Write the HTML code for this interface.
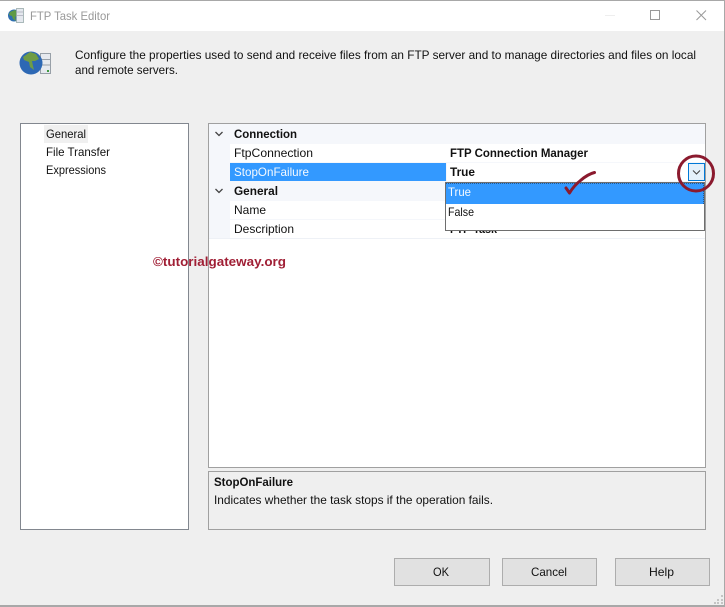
<!DOCTYPE html>
<html><head><meta charset="utf-8"><style>
html,body{margin:0;padding:0;background:#efefef;width:725px;height:607px;overflow:hidden}
svg{display:block}
text{font-family:"Liberation Sans",sans-serif;font-size:12px;fill:#111}
.b{font-weight:bold}
</style></head><body>
<svg width="725" height="607" viewBox="0 0 725 607" xmlns="http://www.w3.org/2000/svg" shape-rendering="crispEdges">
<rect width="725" height="607" fill="#efefef"/>
<rect y="0" width="725" height="31" fill="#fff"/>
<rect y="0" width="725" height="1" fill="#a8a8a8"/>
<rect x="724" width="1" height="607" fill="#a8a8a8"/>
<rect y="605" width="725" height="2" fill="#a8a8a8"/>
<!-- title icon -->
<g shape-rendering="auto">
<circle cx="14" cy="15.500" r="6" fill="#2f6fb0"/><path d="M10 12l5-2 3 2-1 4-2 1 1 4-3-2-1-3-3-1z" fill="#5f9a45"/>
<rect x="16.500" y="8.500" width="7" height="14" fill="#e4e8ee" stroke="#9aa" stroke-width=".8"/>
<path d="M17 12h6M17 15.500h6" stroke="#aab" stroke-width=".7"/>
</g>
<text x="30" y="20" textLength="80" lengthAdjust="spacingAndGlyphs" style="fill:#999">FTP Task Editor</text>
<!-- window controls -->
<rect x="605" y="15" width="10" height="1" fill="#eee"/>
<rect x="650.500" y="10.500" width="9" height="9" fill="none" stroke="#999"/>
<path d="M696.500 10.500L706 20M706 10.500L696.500 20" stroke="#999" fill="none" shape-rendering="auto"/>
<!-- large icon -->
<g shape-rendering="auto">
<rect x="40.500" y="53.500" width="10" height="20" fill="#e6e9ee" stroke="#98a0a8"/>
<path d="M41 59.500h9M41 65h9" stroke="#98a0a8"/>
<rect x="47" y="70" width="2" height="2" fill="#3f9a3f"/>
<circle cx="31" cy="63" r="11.500" fill="#2d68b4"/>
<path d="M23 57l7-5 6 2 3 5-4 2-3 0 1 5 1 4-4-3-1-5-5-2z" fill="#6f9c45"/>
</g>
<text x="75" y="59" textLength="621" lengthAdjust="spacingAndGlyphs">Configure the properties used to send and receive files from an FTP server and to manage directories and files on local</text>
<text x="75" y="74" textLength="103" lengthAdjust="spacingAndGlyphs">and remote servers.</text>
<!-- left panel -->
<rect x="20.500" y="123.500" width="168" height="406" fill="#fff" stroke="#82878f"/>
<rect x="44" y="125" width="44" height="18" fill="#f0f0f0"/>
<text x="46" y="138" textLength="40" lengthAdjust="spacingAndGlyphs">General</text>
<text x="46" y="156" textLength="64" lengthAdjust="spacingAndGlyphs">File Transfer</text>
<text x="46" y="174" textLength="60" lengthAdjust="spacingAndGlyphs">Expressions</text>
<!-- property grid -->
<rect x="208.500" y="123.500" width="497" height="344" fill="#fff" stroke="#a0a0a0"/>
<rect x="209" y="124" width="496" height="115" fill="#f5f7fb"/>
<rect x="230" y="144" width="475" height="18" fill="#fff"/>
<rect x="230" y="163" width="216" height="18" fill="#3399ff"/>
<rect x="447" y="163" width="258" height="18" fill="#fff"/>
<rect x="230" y="201" width="475" height="18" fill="#fff"/>
<rect x="230" y="220" width="475" height="18" fill="#fff"/>
<rect x="209" y="238" width="496" height="1" fill="#eef1f6"/>
<path d="M215.500 132l3.500 3.500 3.500-3.500M215.500 189l3.500 3.500 3.500-3.500" fill="none" stroke="#444" stroke-width="1.300" shape-rendering="auto"/>
<text class="b" x="234" y="138" textLength="63" lengthAdjust="spacingAndGlyphs">Connection</text>
<text x="234" y="157" textLength="79" lengthAdjust="spacingAndGlyphs">FtpConnection</text>
<text x="234" y="176" textLength="75" lengthAdjust="spacingAndGlyphs" style="fill:#f4f9ff">StopOnFailure</text>
<text class="b" x="234" y="195" textLength="44" lengthAdjust="spacingAndGlyphs">General</text>
<text x="234" y="214" textLength="32" lengthAdjust="spacingAndGlyphs">Name</text>
<text x="234" y="233" textLength="60" lengthAdjust="spacingAndGlyphs">Description</text>
<text class="b" x="450" y="157" textLength="138" lengthAdjust="spacingAndGlyphs">FTP Connection Manager</text>
<text class="b" x="450" y="176" textLength="25" lengthAdjust="spacingAndGlyphs">True</text>
<text class="b" x="450" y="233" textLength="47" lengthAdjust="spacingAndGlyphs">FTP Task</text>
<!-- dropdown button -->
<rect x="688.500" y="163.500" width="16" height="17" fill="#e5f1fb" stroke="#0078d7"/>
<path d="M693 170.500l3.500 3.500 3.500-3.500" fill="none" stroke="#444" stroke-width="1.100" shape-rendering="auto"/>
<!-- dropdown list -->
<rect x="445.500" y="182.500" width="259" height="48" fill="#fff" stroke="#6e6e6e"/>
<rect x="446" y="183" width="258" height="21" fill="#3399ff"/>
<path d="M446 183.500h258M703.500 183v21" fill="none" stroke="#1b3556" stroke-dasharray="1 1" stroke-opacity=".65"/>
<text x="448" y="196" textLength="23" lengthAdjust="spacingAndGlyphs" style="fill:#f4f9ff">True</text>
<text x="448" y="216" textLength="26" lengthAdjust="spacingAndGlyphs">False</text>
<!-- annotations -->
<circle cx="696" cy="173.500" r="17.500" fill="none" stroke="#8b1a2e" stroke-width="3" shape-rendering="auto"/>
<path d="M566 188l3.500 5c3-5 6.500-9 11-12.500 4-3.500 8-6.500 14-8" fill="none" stroke="#8b1a2e" stroke-width="3" stroke-linecap="round" stroke-linejoin="round" shape-rendering="auto"/>
<text class="b" x="153" y="266" textLength="133" lengthAdjust="spacingAndGlyphs" style="fill:#a01f35;font-size:13px">©tutorialgateway.org</text>
<!-- help pane -->
<rect x="208.500" y="471.500" width="497" height="58" fill="#efefef" stroke="#a0a0a0"/>
<text class="b" x="214" y="486" textLength="79" lengthAdjust="spacingAndGlyphs">StopOnFailure</text>
<text x="214" y="504" textLength="279" lengthAdjust="spacingAndGlyphs">Indicates whether the task stops if the operation fails.</text>
<!-- buttons -->
<rect x="394.500" y="558.500" width="95" height="27" fill="#e1e1e1" stroke="#adadad"/>
<rect x="502.500" y="558.500" width="94" height="27" fill="#e1e1e1" stroke="#adadad"/>
<rect x="615.500" y="558.500" width="94" height="27" fill="#e1e1e1" stroke="#adadad"/>
<text x="433" y="576" textLength="16" lengthAdjust="spacingAndGlyphs">OK</text>
<text x="531" y="576" textLength="36" lengthAdjust="spacingAndGlyphs">Cancel</text>
<text x="649" y="576" textLength="25" lengthAdjust="spacingAndGlyphs">Help</text>
<!-- grip -->
<g fill="#c4c4c4"><rect x="721" y="595" width="2" height="2"/><rect x="721" y="599" width="2" height="2"/><rect x="717" y="599" width="2" height="2"/><rect x="721" y="602" width="2" height="2"/><rect x="717" y="602" width="2" height="2"/><rect x="714" y="602" width="2" height="2"/></g>
</svg>
</body></html>
